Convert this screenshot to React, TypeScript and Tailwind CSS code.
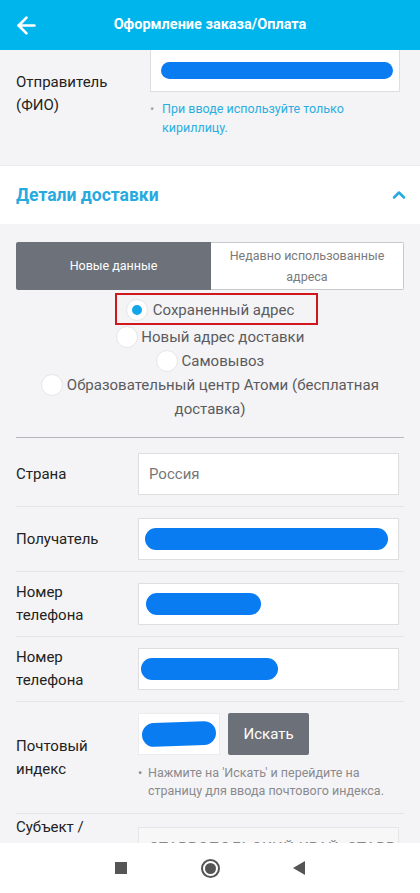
import { ArrowLeft, ChevronUp } from 'lucide-react';

const font = { fontFamily: 'Roboto, "Noto Sans", sans-serif' };

function Pill({ className }: { className: string }) {
  return <div className={`h-[22px] rounded-full bg-[#0a7cf2] ${className}`} />;
}

function Radio({ checked = false }: { checked?: boolean }) {
  return (
    <span className="relative top-[-1px] inline-flex h-[22px] w-[22px] items-center justify-center rounded-full border border-[#e6e6e8] bg-white align-middle">
      {checked && <span className="h-[10px] w-[10px] rounded-full bg-[#12a6ea]" />}
    </span>
  );
}

function FormRow({
  label,
  children,
  first = false,
}: {
  label: React.ReactNode;
  children: React.ReactNode;
  first?: boolean;
}) {
  return (
    <div
      className={`mx-4 flex items-center border-b border-[#e4e4e7] ${first ? 'pt-[15px]' : 'pt-[11px]'} pb-[11px]`}
    >
      <div className="-my-[2px] w-[122px] shrink-0 pr-[20px] text-[15px] leading-[23px] text-[#222]">{label}</div>
      <div className="min-w-0 flex-1 pr-[5px]">{children}</div>
    </div>
  );
}

function InputBox({ children }: { children?: React.ReactNode }) {
  return (
    <div className="flex h-[42px] items-center border border-[#dedee0] bg-white px-[10px]">{children}</div>
  );
}

export default function App() {
  return (
    <div className="flex h-[893px] w-[420px] flex-col overflow-hidden bg-[#f4f4f6]" style={font}>
      {/* top bar */}
      <header className="flex h-[50px] shrink-0 items-center bg-[#00b4ec] text-white">
        <div className="flex w-[56px] justify-start pl-[13px]">
          <ArrowLeft size={27} strokeWidth={2.4} />
        </div>
        <h1 className="flex-1 text-center text-[14.5px] font-bold">Оформление заказа/Оплата</h1>
        <div className="w-[56px]" />
      </header>

      <main className="flex-1 overflow-hidden">
        {/* sender */}
        <div className="flex pb-[20px]">
          <div className="w-[150px] shrink-0 pl-4 pt-[21px] text-[15px] leading-[23px] text-[#222]">
            Отправитель
            <br />
            (ФИО)
          </div>
          <div className="w-[250px]">
            <div className="flex h-[42px] items-center border border-t-0 border-[#dedee0] bg-white pl-[10px] pr-[6px]">
              <div className="h-[17px] w-full rounded-full bg-[#0a7cf2]" />
            </div>
            <div className="mt-[7px] flex text-[12.5px] leading-[19px] text-[#2aaee2]">
              <span className="w-[12px] shrink-0 text-[#9aa]">•</span>
              <span>При вводе используйте только кириллицу.</span>
            </div>
          </div>
        </div>

        {/* delivery section header */}
        <div className="mt-[8px] flex h-[59px] items-center justify-between border-t border-[#ececee] bg-white pl-4 pr-[11px]">
          <span className="text-[17.5px] font-bold text-[#27aadf]">Детали доставки</span>
          <ChevronUp size={20} strokeWidth={3} className="text-[#27aadf]" />
        </div>

        {/* tabs */}
        <div className="mx-4 mt-[18px] flex h-[48px] overflow-hidden rounded-[2px] text-[12.5px]">
          <div className="flex w-[195px] items-center justify-center bg-[#6c717a] text-white">Новые данные</div>
          <div className="flex flex-1 items-center justify-center border border-l-0 border-[#c9c9cc] bg-white text-center leading-[21px] text-[#7a7a7d]">
            Недавно использованные
            <br />
            адреса
          </div>
        </div>

        {/* delivery options */}
        <div className="mx-4 text-center text-[15px] text-[#5b5b5e]">
          <div className="relative mt-[3px] flex h-[32px] items-center justify-center gap-[5px] pt-[3px]">
            <div className="absolute top-0 left-[99px] h-[32px] w-[203px] border-2 border-[#d0171d]" />
            <Radio checked />
            <span>Сохраненный адрес</span>
          </div>
          <div className="leading-[24px]">
            <Radio /> Новый адрес доставки
          </div>
          <div className="leading-[24px]">
            <Radio /> Самовывоз
          </div>
          <div className="leading-[24px]">
            <Radio /> Образовательный центр Атоми (бесплатная доставка)
          </div>
        </div>

        <div className="mx-4 mt-[16px] border-t border-[#b7b7bb]" />

        {/* address form */}
        <FormRow label="Страна" first>
          <InputBox>
            <span className="text-[15px] text-[#777]">Россия</span>
          </InputBox>
        </FormRow>
        <FormRow label="Получатель">
          <InputBox>
            <Pill className="ml-[-4px] w-[244px]" />
          </InputBox>
        </FormRow>
        <FormRow label="Номер телефона">
          <InputBox>
            <Pill className="ml-[-3px] w-[115px]" />
          </InputBox>
        </FormRow>
        <FormRow label="Номер телефона">
          <InputBox>
            <Pill className="ml-[-8px] w-[137px]" />
          </InputBox>
        </FormRow>
        <FormRow label="Почтовый индекс">
          <div className="flex gap-[8px]">
            <div className="flex h-[42px] w-[82px] items-center border border-[#ececee] bg-white px-[3px]">
              <div className="h-[24px] w-[75px] -rotate-2 rounded-full bg-[#0a7cf2]" />
            </div>
            <button className="h-[42px] w-[81px] rounded-[2px] bg-[#6c7079] text-[15px] text-white">Искать</button>
          </div>
          <div className="mt-[9px] mb-[2px] flex text-[12.5px] leading-[18px] text-[#8a8a8e]">
            <span className="w-[10px] shrink-0">•</span>
            <span>Нажмите на 'Искать' и перейдите на страницу для ввода почтового индекса.</span>
          </div>
        </FormRow>
        <div className="mx-4 flex pt-[2px]">
          <div className="w-[122px] shrink-0 pr-[20px] text-[15px] leading-[23px] text-[#222]">
            Субъект / Населенный пункт
          </div>
          <div className="mt-[11px] min-w-0 flex-1 pr-[5px]">
            <div className="flex h-[42px] items-center overflow-hidden whitespace-nowrap border border-[#e6e6e8] bg-[#f7f7f8] px-[10px] text-[15px] tracking-[0.5px] text-[#888]">
              СТАВРОПОЛЬСКИЙ КРАЙ, СТАВРОПОЛЬ
            </div>
          </div>
        </div>
      </main>

      {/* system navigation */}
      <nav className="flex h-[50px] shrink-0 items-center justify-center bg-white">
        <div className="flex w-[190px] items-center justify-between">
          <div className="h-[12px] w-[12px] bg-[#555]" />
          <div className="flex h-[19px] w-[19px] items-center justify-center rounded-full border-2 border-[#555]">
            <div className="h-[11px] w-[11px] rounded-full bg-[#555]" />
          </div>
          <svg width="12" height="14" viewBox="0 0 12 14">
            <path d="M12 0 L0 7 L12 14 Z" fill="#555" />
          </svg>
        </div>
      </nav>
    </div>
  );
}
